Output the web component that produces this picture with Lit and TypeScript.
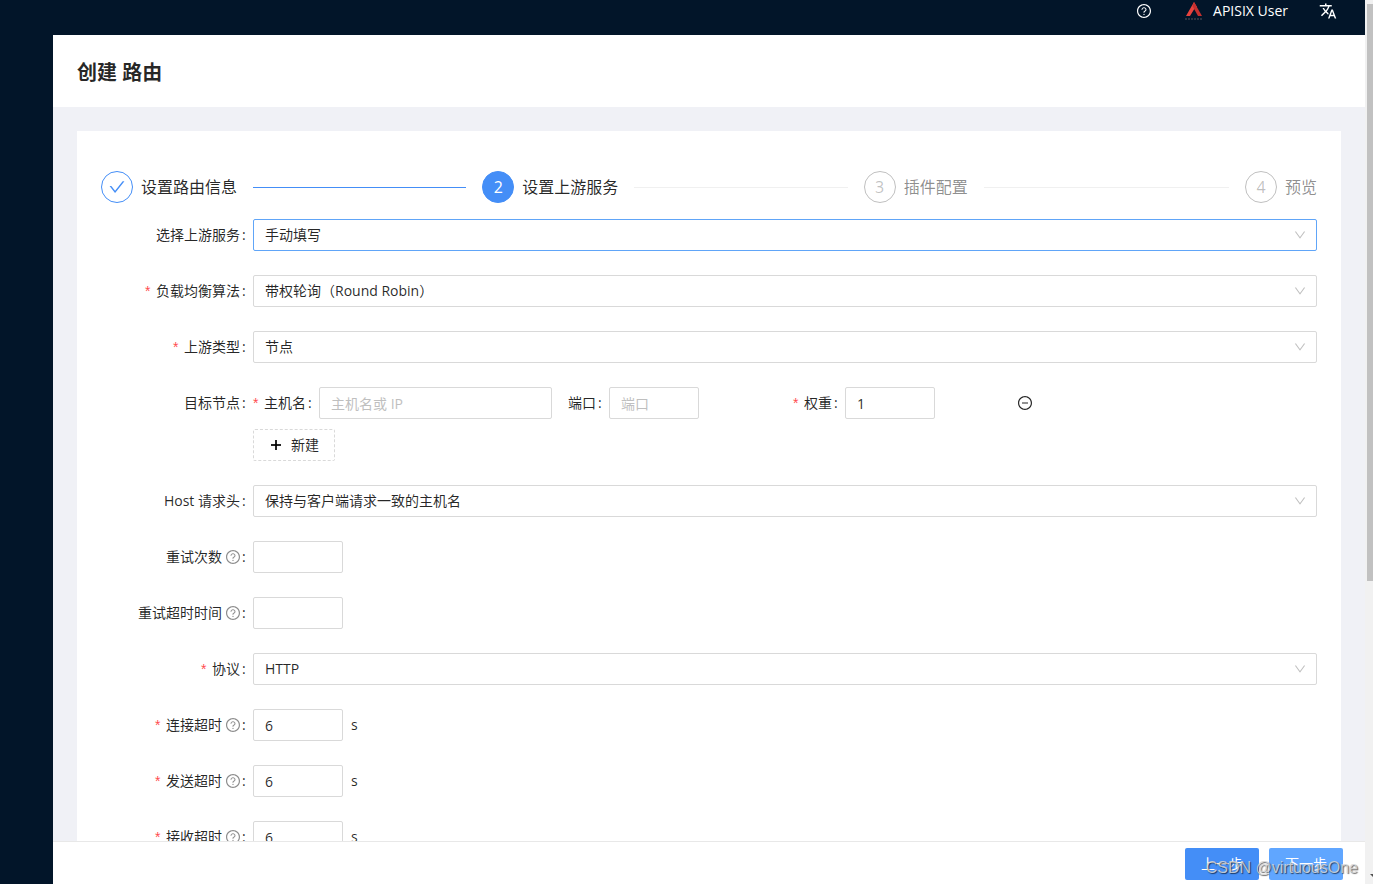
import { LitElement, html, css, svg, nothing } from "lit";
import { customElement, property } from "lit/decorators.js";
import { classMap } from "lit/directives/class-map.js";

const ring =
  "M512 64C264.6 64 64 264.6 64 512s200.6 448 448 448 448-200.6 448-448S759.4 64 512 64zm0 820c-205.4 0-372-166.6-372-372s166.6-372 372-372 372 166.6 372 372-166.6 372-372 372z";

const icons: Record<string, { box: string; paths: string[] }> = {
  question: {
    box: "64 64 896 896",
    paths: [
      ring,
      "M623.6 316.7C593.6 290.4 554 276 512 276s-81.6 14.5-111.6 40.7C369.2 344 352 380.7 352 420v7.6c0 4.4 3.6 8 8 8h48c4.4 0 8-3.6 8-8V420c0-44.1 43.1-80 96-80s96 35.9 96 80c0 31.1-22 59.6-56.1 72.7-21.2 8.1-39.2 22.3-52.1 40.9-13.1 19-19.9 41.8-19.9 64.9V620c0 4.4 3.6 8 8 8h48c4.4 0 8-3.6 8-8v-22.7a48.3 48.3 0 0130.9-44.8c59-22.7 97.1-74.7 97.1-132.5.1-39.3-17.1-76-48.3-103.3zM472 732a40 40 0 1080 0 40 40 0 10-80 0z",
    ],
  },
  minus: {
    box: "64 64 896 896",
    paths: [
      ring,
      "M696 480H328c-4.4 0-8 3.6-8 8v48c0 4.4 3.6 8 8 8h368c4.4 0 8-3.6 8-8v-48c0-4.4-3.6-8-8-8z",
    ],
  },
  plus: {
    box: "0 0 14 14",
    paths: ["M6 2h2v10H6z", "M2 6h10v2H2z"],
  },
  down: {
    box: "64 64 896 896",
    paths: [
      "M884 256h-75c-5.1 0-9.9 2.5-12.9 6.6L512 654.2 227.9 262.6c-3-4.1-7.8-6.6-12.9-6.6h-75c-6.5 0-10.3 7.4-6.5 12.7l352.6 486.1c12.8 17.6 39 17.6 51.7 0l352.6-486.1c3.9-5.3.1-12.7-6.4-12.7z",
    ],
  },
  check: {
    box: "64 64 896 896",
    paths: [
      "M912 190h-69.9c-9.8 0-19.1 4.5-25.1 12.2L404.7 724.5 207 474a32 32 0 00-25.1-12.2H112c-6.7 0-10.4 7.7-6.3 12.9l273.9 347c12.8 16.2 37.4 16.2 50.3 0l488.4-618.9c4.1-5.1.4-12.8-6.3-12.8z",
    ],
  },
  translate: {
    box: "0 0 24 24",
    paths: [
      "M12.87 15.07l-2.54-2.51.03-.03c1.74-1.94 2.98-4.17 3.71-6.53H17V4h-7V2H8v2H1v1.99h11.17C11.5 7.92 10.44 9.75 9 11.35 8.07 10.32 7.3 9.19 6.69 8h-2c.73 1.63 1.73 3.17 2.98 4.56l-5.09 5.02L4 19l5-5 3.11 3.11.76-2.04zM18.5 10h-2L12 22h2l1.12-3h4.75L21 22h2l-4.5-12zm-2.62 7l1.62-4.33L19.12 17h-3.24z",
    ],
  },
};

@customElement("ui-icon")
class UiIcon extends LitElement {
  @property() name = "";
  static styles = css`
    :host { display: inline-flex; width: 14px; height: 14px; flex: none; }
    svg { width: 100%; height: 100%; fill: currentColor; }
  `;
  render() {
    const icon = icons[this.name];
    return icon
      ? html`<svg viewBox=${icon.box} aria-hidden="true">${icon.paths.map((d) => svg`<path d=${d}></path>`)}</svg>`
      : nothing;
  }
}

const steps = [
  { title: "设置路由信息", state: "done" },
  { title: "设置上游服务", state: "active" },
  { title: "插件配置", state: "wait" },
  { title: "预览", state: "wait" },
];

@customElement("app-root")
export class AppRoot extends LitElement {
  static styles = css`
    :host {
      display: grid;
      grid-template-columns: 53px minmax(0, 1fr) 8px;
      grid-template-rows: 35px minmax(0, 1fr) auto;
      height: 100vh;
      overflow: hidden;
      position: relative;
      background: #f0f1f6;
      color: rgba(0, 0, 0, 0.85);
      font: 14px/22px "Open Sans", "Noto Sans CJK SC", sans-serif;
    }
    *, *::before, *::after { box-sizing: border-box; }
    input, select, button { font: inherit; color: inherit; margin: 0; outline: none; }
    .topbar {
      grid-column: 1 / 3;
      display: flex;
      justify-content: flex-end;
      align-items: flex-start;
      padding-right: 28px;
      background: #021529;
      color: #fff;
    }
    .topbar button {
      display: flex;
      align-items: center;
      height: 22px;
      padding: 0;
      border: 0;
      background: none;
    }
    .help { margin-right: 32px; }
    .user { margin-right: 31px; gap: 8px; }
    .logo { width: 22px; height: 20px; }
    .lang ui-icon { width: 18px; height: 18px; }
    .side { grid-row: 2 / 4; background: #021529; }
    .scroll {
      grid-column: 3;
      grid-row: 1 / 4;
      display: flex;
      flex-direction: column;
      justify-content: space-between;
      align-items: flex-end;
      padding: 4px 0 6px 2px;
      background: #f1f1f1;
    }
    .thumb { width: 100%; height: 66%; background: #c1c1c1; }
    .scroll svg { width: 3px; height: 4px; }
    .main { overflow: hidden; }
    .title { padding: 22px 24px 18px; background: #fff; }
    h1 { margin: 0; font-size: 20px; line-height: 32px; font-weight: 600; }
    .card { margin: 24px; padding: 40px 24px 24px; background: #fff; }
    .steps {
      display: flex;
      gap: 16px;
      margin: 0 0 16px;
      padding: 0;
      list-style: none;
      font-size: 16px;
      line-height: 32px;
    }
    .step { display: flex; align-items: center; flex: 1 1 0; white-space: nowrap; }
    .step:last-child { flex: none; }
    .step:not(:last-child)::after {
      content: "";
      flex: 1;
      height: 1px;
      margin-left: 16px;
      background: #f0f0f0;
    }
    .step.done::after { background: #448ef7; }
    .badge {
      display: flex;
      align-items: center;
      justify-content: center;
      width: 32px;
      height: 32px;
      margin-right: 8px;
      border: 1px solid #448ef7;
      border-radius: 50%;
      color: #448ef7;
    }
    .badge ui-icon { width: 16px; height: 16px; }
    .active .badge { background: #448ef7; color: #fff; }
    .wait { color: rgba(0, 0, 0, 0.45); }
    .wait .badge { border-color: rgba(0, 0, 0, 0.25); color: rgba(0, 0, 0, 0.25); }
    .row { display: grid; grid-template-columns: 12.5% minmax(0, 1fr); margin-bottom: 24px; }
    .label {
      display: flex;
      align-items: center;
      justify-content: flex-end;
      height: 32px;
      white-space: nowrap;
    }
    .label::after { content: ":"; width: 3px; margin: 0 8px 0 2px; }
    .label.req::before {
      content: "*";
      width: 7px;
      height: 20px;
      margin-right: 4px;
      color: #ff4d4f;
      font: 14px/20px "Liberation Sans", sans-serif;
    }
    .label ui-icon { margin-left: 4px; color: rgba(0, 0, 0, 0.45); }
    .picker { display: grid; align-items: center; }
    .picker > * { grid-area: 1 / 1; }
    select, input {
      width: 100%;
      height: 32px;
      padding: 0 11px;
      border: 1px solid #d9d9d9;
      border-radius: 2px;
      background: #fff;
      appearance: none;
    }
    .focused select { border-color: #60a5f8; }
    .picker ui-icon {
      justify-self: end;
      width: 12px;
      height: 12px;
      margin-right: 11px;
      color: rgba(0, 0, 0, 0.25);
      pointer-events: none;
    }
    input::placeholder { color: #bfbfbf; opacity: 1; }
    .num { width: 90px; flex: none; }
    .short { display: flex; align-items: center; gap: 8px; }
    .nodes {
      display: grid;
      grid-template-columns: 7fr 5fr 5fr 7fr;
      margin: 0 -16px 10px 0;
    }
    .cell { display: flex; align-items: center; padding-right: 16px; }
    .icon-btn { display: flex; padding: 0; border: 0; background: none; }
    .add {
      display: inline-flex;
      align-items: center;
      gap: 8px;
      height: 32px;
      padding: 0 15px;
      border: 1px dashed #d9d9d9;
      border-radius: 2px;
      background: #fff;
    }
    .foot {
      grid-column: 2;
      display: flex;
      justify-content: flex-end;
      gap: 10px;
      padding: 6px 22px 4px;
      border-top: 1px solid #e8e8e8;
      background: #fff;
    }
    .foot button {
      height: 32px;
      padding: 0 16px;
      border: 0;
      border-radius: 2px;
      background: #448ef7;
      color: #fff;
    }
    .foot .next { background: #60a6ff; }
    .mark {
      position: absolute;
      right: 15px;
      bottom: 5px;
      color: rgba(215, 215, 215, 0.85);
      text-shadow: 1px 1px 1px rgba(0, 0, 0, 0.6);
      font: 16px/22px "Liberation Sans", sans-serif;
      pointer-events: none;
    }
  `;

  private label(id: string, text: string, required = false, hint = false) {
    return html`<label for=${id} class=${classMap({ label: true, req: required })}
      >${text}${hint ? html`<ui-icon name="question"></ui-icon>` : nothing}</label
    >`;
  }

  private pick(id: string, text: string, value: string, required = false, focused = false) {
    return html`<div class="row">
      ${this.label(id, text, required)}
      <div class=${classMap({ picker: true, focused })}>
        <select id=${id}><option>${value}</option></select>
        <ui-icon name="down"></ui-icon>
      </div>
    </div>`;
  }

  private amount(id: string, text: string, value = "", unit = "", required = false) {
    return html`<div class="row">
      ${this.label(id, text, required, true)}
      <div class="short">
        <input class="num" id=${id} inputmode="numeric" .value=${value} />
        ${unit ? html`<span>${unit}</span>` : nothing}
      </div>
    </div>`;
  }

  render() {
    return html`
      <header class="topbar">
        <button class="help" aria-label="帮助"><ui-icon name="question"></ui-icon></button>
        <button class="user">
          <svg class="logo" viewBox="0 0 22 20" aria-hidden="true">
            <path d="M11 1 L14 6 L11 8.500 L7 15 L3 15 Z" fill="#e8433e"></path>
            <path d="M11 1 L19 15 L15 15 L9.500 5 Z" fill="#c4302f"></path>
            <path d="M2 18h18" stroke="#2c3542" stroke-width="2" stroke-dasharray="2 1"></path>
          </svg>
          <span>APISIX User</span>
        </button>
        <button class="lang" aria-label="语言"><ui-icon name="translate"></ui-icon></button>
      </header>
      <aside class="side"></aside>
      <main class="main">
        <div class="title"><h1>创建 路由</h1></div>
        <section class="card">
          <ol class="steps">
            ${steps.map(
              (s, i) => html`<li class="step ${s.state}">
                <span class="badge">${s.state === "done" ? html`<ui-icon name="check"></ui-icon>` : i + 1}</span>
                <span>${s.title}</span>
              </li>`
            )}
          </ol>
          <form @submit=${(e: Event) => e.preventDefault()}>
            ${this.pick("upstream", "选择上游服务", "手动填写", false, true)}
            ${this.pick("algorithm", "负载均衡算法", "带权轮询（Round Robin）", true)}
            ${this.pick("type", "上游类型", "节点", true)}
            <div class="row">
              ${this.label("host", "目标节点")}
              <div>
                <div class="nodes">
                  <div class="cell">${this.label("host", "主机名", true)}<input id="host" placeholder="主机名或 IP" /></div>
                  <div class="cell">${this.label("port", "端口")}<input class="num" id="port" placeholder="端口" /></div>
                  <div class="cell">${this.label("weight", "权重", true)}<input class="num" id="weight" .value=${"1"} /></div>
                  <div class="cell">
                    <button type="button" class="icon-btn" aria-label="删除"><ui-icon name="minus"></ui-icon></button>
                  </div>
                </div>
                <button type="button" class="add"><ui-icon name="plus"></ui-icon>新建</button>
              </div>
            </div>
            ${this.pick("pass-host", "Host 请求头", "保持与客户端请求一致的主机名")}
            ${this.amount("retries", "重试次数")} ${this.amount("retry-timeout", "重试超时时间")}
            ${this.pick("scheme", "协议", "HTTP", true)}
            ${this.amount("connect", "连接超时", "6", "s", true)}
            ${this.amount("send", "发送超时", "6", "s", true)}
            ${this.amount("read", "接收超时", "6", "s", true)}
          </form>
        </section>
      </main>
      <footer class="foot">
        <button>上一步</button>
        <button class="next">下一步</button>
      </footer>
      <div class="scroll">
        <div class="thumb"></div>
        <svg viewBox="0 0 3 4" aria-hidden="true"><path d="M0 0h3v3z" fill="#505050"></path></svg>
      </div>
      <div class="mark">CSDN @virtuousOne</div>
    `;
  }
}
